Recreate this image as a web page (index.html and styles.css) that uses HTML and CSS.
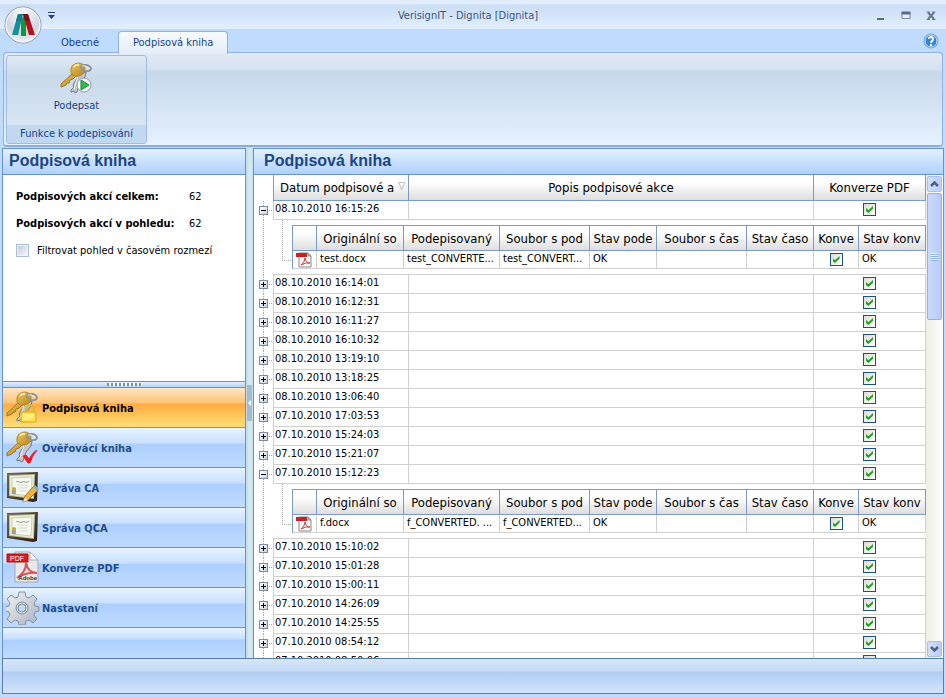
FILE: index.html
```html
<!DOCTYPE html>
<html lang="cs">
<head>
  <meta charset="UTF-8" />
  <meta name="viewport" content="width=device-width, initial-scale=1.0">
  <title>VerisignIT - Dignita [Dignita]</title>
  <link rel="stylesheet" href="styles.css">
</head>
<body>

  <!-- Shared icons -->
  <svg class="defs" width="0" height="0" aria-hidden="true">
    <defs>
      <linearGradient id="gold" x1="0" y1="0" x2="1" y2="1">
        <stop offset="0" stop-color="#ecc75f" />
        <stop offset="1" stop-color="#b98318" />
      </linearGradient>
      <linearGradient id="silver" x1="0" y1="0" x2="1" y2="1">
        <stop offset="0" stop-color="#f1f4f8" />
        <stop offset="1" stop-color="#a9b2be" />
      </linearGradient>
      <linearGradient id="frame" x1="0" y1="0" x2="1" y2="1">
        <stop offset="0" stop-color="#7a6a52" />
        <stop offset="1" stop-color="#2c1a10" />
      </linearGradient>
      <radialGradient id="orb" cx="0.5" cy="0.25" r="0.8">
        <stop offset="0" stop-color="#ffffff" />
        <stop offset="0.6" stop-color="#cfd6e2" />
        <stop offset="1" stop-color="#f7f9fc" />
      </radialGradient>
    </defs>
    <symbol id="keys" viewBox="0 0 32 32">
      <path d="M20 12l-6 9-1 3 1 1-3 3 0 2 3-1 1 2 2-1 3-9 5-6 1-5z" fill="#c3c6cb" stroke="#777b84" />
      <path d="M18 14l-4 13" stroke="#f5f6f8" />
      <path d="M12 12L1 22l0 3 5-2 1-2 2 0 1-3 3-1 4-4z" fill="url(#gold)" stroke="#a0761c" />
      <path d="M11 7q1-5 7-6q6 0 7 5q0 7-7 8q-3 1-5-1q-3-2-2-6z" fill="url(#gold)" stroke="#b5862a" />
      <path d="M14 5q2-3 5-2" fill="none" stroke="#fbe9a4" stroke-width="2" />
      <ellipse cx="26" cy="6" rx="5" ry="3" fill="none" stroke="#8c949d" stroke-width="2" transform="rotate(12 26 6)" />
      <path d="M22 4q4-1 7 2" fill="none" stroke="#e6ebef" />
    </symbol>
    <symbol id="certificate" viewBox="0 0 32 32">
      <path d="M1 2L32 1L31 30L27 31L1 27Z" fill="url(#frame)" />
      <path d="M3 4L29 3L28 28L3 25Z" fill="#b9bd98" />
      <path d="M4 5L28 4L27 27L4 24Z" fill="#e9f0dc" />
      <path d="M6 7l20-1-1 19-19-2z" fill="#f8faf2" stroke="#c5d4ae" />
      <path d="M10 11q1-1 3 0t3 0 3 0 4-1" fill="none" stroke="#8b988f" />
      <path d="M11 14h11M12 17h9M14 20h8" fill="none" stroke="#d3dbcd" />
      <path d="M7 19v4M9 19v4" stroke="#3a4f88" />
      <circle cx="8" cy="18" r="2" fill="#c9a93c" />
    </symbol>
    <symbol id="pdf-small" viewBox="0 0 16 16">
      <path d="M3 1h9l3 3v11H3z" fill="#f8f8f8" stroke="#8a8a8a" />
      <path d="M12 1v3h3z" fill="#c9c9c9" stroke="#8a8a8a" />
      <path d="M0 1h11v4H0z" fill="#cf2020" />
      <path d="M5 13q4-3 4-7q1 5 5 5q-4-1-9 2z" fill="none" stroke="#d03b3b" />
    </symbol>
  </svg>

  <div class="window">

    <header class="title-bar">
      <button class="quick-menu" aria-label="Nabídka rychlého přístupu">
        <svg width="7" height="7" viewBox="0 0 14 14"><path d="M0 0h14v2H0zM0 6h14L7 14z" fill="#27407a" /></svg>
      </button>
      <h1>VerisignIT - Dignita [Dignita]</h1>
      <div class="window-buttons">
        <button aria-label="Minimalizovat"><svg width="10" height="10" viewBox="0 0 10 10"><path d="M1 7h7v2H1z" fill="#5b6b85" /></svg></button>
        <button aria-label="Maximalizovat"><svg width="10" height="10" viewBox="0 0 20 20"><path d="M2 4h16v11H2z" fill="#e8eefa" stroke="#7b89a5" stroke-width="2" /><path d="M1 1h18v6H1z" fill="#5b6b85" /></svg></button>
        <button aria-label="Zavřít"><svg width="10" height="10" viewBox="0 0 20 20"><path d="M4 3l12 13M16 3L4 16" stroke="#66738b" stroke-width="4" /><path d="M1 2h7M12 2h7M1 17h7M12 17h7" stroke="#66738b" stroke-width="2" /></svg></button>
      </div>
    </header>

    <button class="app-button" aria-label="Hlavní nabídka">
      <svg width="38" height="38" viewBox="0 0 38 38">
        <circle cx="19" cy="19" r="18" fill="url(#orb)" stroke="#8b97ab" />
        <circle cx="19" cy="19" r="17" fill="none" stroke="#ffffff" />
        <path d="M17 13l3-3 2 3v17h-5z" fill="#0b9a3c" />
        <path d="M14 8h5l-5 21H8z" fill="#12909c" />
        <path d="M19 8h5l7 21h-6z" fill="#b3121d" />
        <path d="M19 8h5l2 7h-5z" fill="#7d1018" />
        <path d="M14 8h5l-2 7h-5z" fill="#0e7d94" />
      </svg>
    </button>

    <nav class="tabs">
      <a href="#obecne">Obecné</a>
      <a href="#kniha" class="active">Podpisová kniha</a>
      <button class="help" aria-label="Nápověda">
        <svg width="16" height="16" viewBox="0 0 16 16">
          <circle cx="8" cy="8" r="7" fill="#2c87e4" stroke="#8ca2c4" />
          <circle cx="8" cy="8" r="6" fill="none" stroke="#d8eaff" />
          <path d="M6 6q0-2 2-2t2 2q0 1-1 2t-1 2M8 11v2" fill="none" stroke="#fff" stroke-width="2" />
        </svg>
      </button>
    </nav>

    <section class="ribbon">
      <div class="ribbon-group">
        <button class="ribbon-button">
          <svg width="34" height="34" viewBox="0 0 34 34">
            <use href="#keys" width="32" height="32" />
            <circle cx="24" cy="23" r="7" fill="#f6f8fa" stroke="#929aa5" />
            <path d="M21 18l8 5-8 5z" fill="#2fbd4b" stroke="#128b30" />
          </svg>
          <span>Podepsat</span>
        </button>
        <div class="ribbon-caption">Funkce k podepisování</div>
      </div>
    </section>

    <main class="content">

      <aside class="sidebar">
        <h2>Podpisová kniha</h2>
        <div class="summary">
          <dl>
            <dt>Podpisových akcí celkem:</dt><dd>62</dd>
            <dt>Podpisových akcí v pohledu:</dt><dd>62</dd>
          </dl>
          <label class="filter"><input type="checkbox"> Filtrovat pohled v časovém rozmezí</label>
        </div>
        <div class="grip"><span></span></div>
        <nav class="modules">
          <a href="#kniha" class="active">
            <svg width="34" height="34" viewBox="0 0 34 34">
              <use href="#keys" width="32" height="32" />
              <path d="M20 21q0-7 4-7t4 7" fill="none" stroke="#d8ba3a" stroke-width="2" />
              <path d="M15 21h15v10H15z" fill="#ffe04a" stroke="#d2a91a" />
              <path d="M17 24h11M17 26h11M17 28h8" stroke="#fff8bd" />
            </svg>
            Podpisová kniha
          </a>
          <a href="#overovaci">
            <svg width="34" height="34" viewBox="0 0 34 34">
              <use href="#keys" width="32" height="32" />
              <path d="M17 25l3-1 3 4q4-7 8-9q-5 6-7 13h-2z" fill="#ee1c25" stroke="#ee1c25" />
            </svg>
            Ověřovácí kniha
          </a>
          <a href="#ca">
            <svg width="34" height="34" viewBox="0 0 34 34">
              <use href="#certificate" width="32" height="32" />
              <path d="M17 31l2-6L28 15l4 4-10 10z" fill="#f3b33a" stroke="#a86f16" />
              <path d="M27 16l2-2 4 4-2 2z" fill="#7fb5a8" />
              <path d="M17 31l2-5 3 3z" fill="#f7e3bd" />
            </svg>
            Správa CA
          </a>
          <a href="#qca">
            <svg width="34" height="34" viewBox="0 0 34 34"><use href="#certificate" width="32" height="32" /></svg>
            Správa QCA
          </a>
          <a href="#pdf">
            <svg width="34" height="34" viewBox="0 0 34 34">
              <path d="M9 1h15l8 8v22H9z" fill="#e9e9e9" stroke="#a9a9a9" />
              <path d="M24 1v8h8z" fill="#ffffff" stroke="#a9a9a9" />
              <path d="M11 27q9-6 9-15q2 10 11 10q-10-1-20 5z" fill="none" stroke="#dc5257" stroke-width="2" />
              <path d="M1 3h21v8H1z" fill="#d81c20" stroke="#a50f12" />
              <text x="4" y="10" class="pdf-tag">PDF</text>
              <text x="31" y="29" text-anchor="end" class="pdf-brand">Adobe</text>
            </svg>
            Konverze PDF
          </a>
          <a href="#nastaveni">
            <svg width="34" height="34" viewBox="0 0 34 34">
              <path d="M13 1h6l1 5 3 1 4-3 4 4-3 4 1 3 4 1v4l-4 1-1 3 3 4-4 4-4-3-3 1-1 4h-6l-1-4-3-1-4 3-4-4 3-4-1-3-4-1v-4l4-1 1-3-3-4 4-4 4 3 3-1z" fill="url(#silver)" stroke="#8692a1" />
              <circle cx="16" cy="17" r="6" fill="#dbe3ec" stroke="#8290a0" />
              <circle cx="16" cy="17" r="4" fill="#bfdaf8" stroke="#8290a0" />
            </svg>
            Nastavení
          </a>
          <div class="modules-rest"></div>
        </nav>
      </aside>

      <div class="splitter"><button aria-label="Skrýt panel"></button></div>

      <section class="book">
        <h2>Podpisová kniha</h2>
        <div class="book-body">
          <div class="grid-view">
            <table class="grid">
              <colgroup><col class="c-tree"><col class="c-date"><col><col class="c-pdf"></colgroup>
              <thead>
                <tr><td></td><th class="sorted">Datum podpisové a</th><th>Popis podpisové akce</th><th>Konverze PDF</th></tr>
              </thead>
              <tbody>
                <tr><td><button class="toggle open" aria-label="Sbalit"></button></td><td>08.10.2010 16:15:26</td><td></td><td><input type="checkbox" aria-label="Konverze PDF" checked></td></tr>
                <tr class="detail">
                  <td></td>
                  <td colspan="3">
                    <table class="files">
                      <colgroup><col class="f-icon"><col class="f-original"><col class="f-signed"><col class="f-signature"><col class="f-state"><col><col class="f-state"><col class="f-conv"><col class="f-state"></colgroup>
                      <thead>
                        <tr><th></th><th>Originální so</th><th>Podepisovaný</th><th>Soubor s pod</th><th>Stav pode</th><th>Soubor s čas</th><th>Stav časo</th><th>Konve</th><th>Stav konv</th></tr>
                      </thead>
                      <tbody>
                        <tr><td><svg width="16" height="16"><use href="#pdf-small" /></svg></td><td>test.docx</td><td>test_CONVERTE...</td><td>test_CONVERT...</td><td>OK</td><td></td><td></td><td><input type="checkbox" aria-label="Konverze" checked></td><td>OK</td></tr>
                      </tbody>
                    </table>
                  </td>
                </tr>
                <tr><td><button class="toggle" aria-label="Rozbalit"></button></td><td>08.10.2010 16:14:01</td><td></td><td><input type="checkbox" aria-label="Konverze PDF" checked></td></tr>
                <tr><td><button class="toggle" aria-label="Rozbalit"></button></td><td>08.10.2010 16:12:31</td><td></td><td><input type="checkbox" aria-label="Konverze PDF" checked></td></tr>
                <tr><td><button class="toggle" aria-label="Rozbalit"></button></td><td>08.10.2010 16:11:27</td><td></td><td><input type="checkbox" aria-label="Konverze PDF" checked></td></tr>
                <tr><td><button class="toggle" aria-label="Rozbalit"></button></td><td>08.10.2010 16:10:32</td><td></td><td><input type="checkbox" aria-label="Konverze PDF" checked></td></tr>
                <tr><td><button class="toggle" aria-label="Rozbalit"></button></td><td>08.10.2010 13:19:10</td><td></td><td><input type="checkbox" aria-label="Konverze PDF" checked></td></tr>
                <tr><td><button class="toggle" aria-label="Rozbalit"></button></td><td>08.10.2010 13:18:25</td><td></td><td><input type="checkbox" aria-label="Konverze PDF" checked></td></tr>
                <tr><td><button class="toggle" aria-label="Rozbalit"></button></td><td>08.10.2010 13:06:40</td><td></td><td><input type="checkbox" aria-label="Konverze PDF" checked></td></tr>
                <tr><td><button class="toggle" aria-label="Rozbalit"></button></td><td>07.10.2010 17:03:53</td><td></td><td><input type="checkbox" aria-label="Konverze PDF" checked></td></tr>
                <tr><td><button class="toggle" aria-label="Rozbalit"></button></td><td>07.10.2010 15:24:03</td><td></td><td><input type="checkbox" aria-label="Konverze PDF" checked></td></tr>
                <tr><td><button class="toggle" aria-label="Rozbalit"></button></td><td>07.10.2010 15:21:07</td><td></td><td><input type="checkbox" aria-label="Konverze PDF" checked></td></tr>
                <tr><td><button class="toggle open" aria-label="Sbalit"></button></td><td>07.10.2010 15:12:23</td><td></td><td><input type="checkbox" aria-label="Konverze PDF" checked></td></tr>
                <tr class="detail">
                  <td></td>
                  <td colspan="3">
                    <table class="files">
                      <colgroup><col class="f-icon"><col class="f-original"><col class="f-signed"><col class="f-signature"><col class="f-state"><col><col class="f-state"><col class="f-conv"><col class="f-state"></colgroup>
                      <thead>
                        <tr><th></th><th>Originální so</th><th>Podepisovaný</th><th>Soubor s pod</th><th>Stav pode</th><th>Soubor s čas</th><th>Stav časo</th><th>Konve</th><th>Stav konv</th></tr>
                      </thead>
                      <tbody>
                        <tr><td><svg width="16" height="16"><use href="#pdf-small" /></svg></td><td>f.docx</td><td>f_CONVERTED. ...</td><td>f_CONVERTED...</td><td>OK</td><td></td><td></td><td><input type="checkbox" aria-label="Konverze" checked></td><td>OK</td></tr>
                      </tbody>
                    </table>
                  </td>
                </tr>
                <tr><td><button class="toggle" aria-label="Rozbalit"></button></td><td>07.10.2010 15:10:02</td><td></td><td><input type="checkbox" aria-label="Konverze PDF" checked></td></tr>
                <tr><td><button class="toggle" aria-label="Rozbalit"></button></td><td>07.10.2010 15:01:28</td><td></td><td><input type="checkbox" aria-label="Konverze PDF" checked></td></tr>
                <tr><td><button class="toggle" aria-label="Rozbalit"></button></td><td>07.10.2010 15:00:11</td><td></td><td><input type="checkbox" aria-label="Konverze PDF" checked></td></tr>
                <tr><td><button class="toggle" aria-label="Rozbalit"></button></td><td>07.10.2010 14:26:09</td><td></td><td><input type="checkbox" aria-label="Konverze PDF" checked></td></tr>
                <tr><td><button class="toggle" aria-label="Rozbalit"></button></td><td>07.10.2010 14:25:55</td><td></td><td><input type="checkbox" aria-label="Konverze PDF" checked></td></tr>
                <tr><td><button class="toggle" aria-label="Rozbalit"></button></td><td>07.10.2010 08:54:12</td><td></td><td><input type="checkbox" aria-label="Konverze PDF" checked></td></tr>
                <tr><td><button class="toggle" aria-label="Rozbalit"></button></td><td>07.10.2010 08:50:06</td><td></td><td><input type="checkbox" aria-label="Konverze PDF" checked></td></tr>
              </tbody>
            </table>
          </div>
          <div class="scrollbar">
            <button aria-label="Nahoru"><svg width="9" height="6" viewBox="0 0 18 12"><path d="M2 10l7-7 7 7" fill="none" stroke="#4d6185" stroke-width="5" /></svg></button>
            <div class="thumb"></div>
            <button class="down" aria-label="Dolů"><svg width="9" height="6" viewBox="0 0 18 12"><path d="M2 2l7 7 7-7" fill="none" stroke="#4d6185" stroke-width="5" /></svg></button>
          </div>
        </div>
      </section>

    </main>

    <footer class="status-bar"></footer>
  </div>

</body>
</html>
```

FILE: styles.css
```css
* {
  box-sizing: border-box;
}

body {
  margin: 0;
  font-family: "DejaVu Sans Condensed", "DejaVu Sans", sans-serif;
  font-size: 11px;
  color: #000;
}

button {
  font: inherit;
  color: inherit;
  padding: 0;
  border: none;
  background: none;
}

a {
  color: inherit;
  text-decoration: none;
}

svg {
  display: block;
}

.defs {
  position: absolute;
}

.window {
  position: relative;
  display: flex;
  flex-direction: column;
  height: 100vh;
  padding: 0 2px 3px;
  background: #bfdbff;
}

/* Title bar */
.title-bar {
  display: grid;
  grid-template-columns: 1fr auto 1fr;
  align-items: center;
  height: 29px;
  margin: 0 -2px;
  padding: 2px 10px 0 0;
  background: linear-gradient(#dfebfb 0, #e5effc 3px, #cadef7 5px, #d3e4fa 50%, #e3effe 100%);
}

.quick-menu {
  justify-self: start;
  margin-left: 48px;
}

.title-bar h1 {
  margin: 0;
  font-size: 11px;
  font-weight: normal;
  color: #3e5380;
}

.window-buttons {
  display: flex;
  justify-content: flex-end;
  gap: 15px;
}

.app-button {
  position: absolute;
  left: 4px;
  top: 6px;
}

/* Ribbon */
.tabs {
  display: flex;
  height: 23px;
  padding-left: 45px;
  color: #15428b;
}

.tabs a {
  height: 23px;
  padding: 0 14px;
  margin-top: 2px;
  line-height: 24px;
}

.tabs a.active {
  z-index: 1;
  margin-left: 5px;
  background: linear-gradient(#f7fbff, #e3ecf8);
  border: 1px solid #8db2e3;
  border-bottom: none;
  border-radius: 4px 4px 0 0;
  line-height: 22px;
}

.help {
  margin-left: auto;
  margin-right: 5px;
}

.ribbon {
  height: 95px;
  margin: 0 1px 1px;
  padding: 2px;
  background: linear-gradient(#e1eaf5 0, #d5e1ef 17px, #c7d8eb 18px, #e5f1ff 100%);
  border: 1px solid #8db2e3;
  border-bottom: 2px solid #8fabd8;
  border-radius: 4px;
}

.ribbon-group {
  display: flex;
  flex-direction: column;
  width: 141px;
  height: 89px;
  color: #15428b;
  background: linear-gradient(#e0eaf5, #c9daec 20px, #dde9f7);
  border: 1px solid #9fbbe0;
  border-radius: 3px;
}

.ribbon-button {
  display: flex;
  flex-direction: column;
  align-items: center;
  gap: 3px;
  flex: 1;
  padding-top: 6px;
}

.ribbon-caption {
  height: 18px;
  line-height: 18px;
  text-align: center;
  background: #c1d8f1;
}

/* Content */
.content {
  display: flex;
  flex: 1;
  min-height: 0;
}

h2 {
  margin: 0;
  height: 26px;
  padding-left: 6px;
  font: bold 16px/24px "Liberation Sans", Arial, sans-serif;
  color: #1e4584;
  background: linear-gradient(#e3f0ff, #afd2ff);
  border-bottom: 1px solid #6593cf;
}

.sidebar {
  display: flex;
  flex-direction: column;
  width: 244px;
  background: #fff;
  border: 1px solid #6593cf;
  border-bottom: none;
}

.summary {
  flex: 1;
  padding: 15px 13px;
}

.summary dl {
  display: grid;
  grid-template-columns: 173px auto;
  row-gap: 13px;
  margin: 0;
  line-height: 14px;
}

.summary dt {
  font-weight: bold;
}

.summary dd {
  margin: 0;
}

.filter {
  display: flex;
  align-items: center;
  gap: 8px;
  margin-top: 13px;
}

input[type="checkbox"] {
  appearance: none;
  display: block;
  width: 13px;
  height: 13px;
  margin: 0 auto;
  background: linear-gradient(135deg, #dcdcd7, #fff);
  border: 1px solid #1c5180;
}

.filter input[type="checkbox"] {
  margin: 0;
  border: 2px solid #f0f5fa;
  outline: 1px solid #a5bdd8;
  outline-offset: -1px;
  background: linear-gradient(135deg, #c2cbd6, #f5f7fa);
}

input[type="checkbox"]:checked::before {
  content: "";
  display: block;
  width: 7px;
  height: 7px;
  margin: 2px;
  background: #21a121;
  clip-path: polygon(0 30%, 35% 60%, 100% 0, 100% 40%, 35% 100%, 0 70%);
}

.grip {
  display: flex;
  justify-content: center;
  height: 7px;
  padding-top: 1px;
  background: linear-gradient(#e3efff, #b4d3fb);
  border-top: 1px solid #6593cf;
  border-bottom: 1px solid #6593cf;
}

.grip span {
  width: 35px;
  height: 3px;
  background: repeating-linear-gradient(90deg, #6a8fc5 0 2px, #fff 2px 4px);
}

.modules a {
  display: flex;
  align-items: center;
  gap: 2px;
  height: 40px;
  padding: 1px 0 0 3px;
  font-weight: bold;
  color: #204d89;
  background: linear-gradient(#e8f3ff 0, #c8e0ff 15px, #adcfff 16px, #bfdbff 100%);
  border-bottom: 1px solid #6593cf;
}

.modules a.active {
  color: #000;
  background: linear-gradient(#ffe6c4 0, #ffc377 15px, #ffab3f 16px, #fedf78 100%);
}

.modules-rest {
  height: 30px;
  background: linear-gradient(#e8f3ff 0, #c8e0ff 11px, #adcfff 12px, #bfdbff 100%);
}

.pdf-tag {
  font: 7px "Liberation Sans", sans-serif;
  fill: #fff;
}

.pdf-brand {
  font: bold 6px "Liberation Sans", sans-serif;
  fill: #333;
}

.splitter {
  display: flex;
  align-items: center;
  justify-content: center;
  width: 7px;
  background: linear-gradient(90deg, #bcd9e8, #d8ecef, #c5dff5);
}

.splitter button {
  width: 5px;
  height: 36px;
  background: #a6bcc9;
}

.splitter button::before {
  content: "";
  display: block;
  width: 0;
  margin: 0 auto;
  border: 3px solid transparent;
  border-left: none;
  border-right-color: #fff;
}

/* Signing book */
.book {
  display: flex;
  flex-direction: column;
  flex: 1;
  min-width: 0;
  background: #fff;
  border: 1px solid #6593cf;
  border-bottom: none;
}

.book h2 {
  padding-left: 10px;
}

.book-body {
  display: flex;
  flex: 1;
  min-height: 0;
}

.grid-view {
  flex: 1;
  overflow: hidden;
}

table {
  width: 100%;
  table-layout: fixed;
  border-collapse: separate;
  border-spacing: 0;
}

th,
td {
  padding: 0;
  overflow: hidden;
  white-space: nowrap;
}

th {
  height: 26px;
  font-size: 13px;
  font-weight: normal;
  background: linear-gradient(#fff 30%, #dedede);
  border-right: 1px solid #7b98cf;
  border-bottom: 1px solid #7b98cf;
}

.c-tree { width: 19px; }
.c-date { width: 136px; }
.c-pdf { width: 112px; }

.sorted {
  padding-left: 6px;
  text-align: left;
  border-left: 1px solid #7b98cf;
}

.sorted::after {
  content: "▽";
  margin-left: 4px;
  font-size: 10px;
  color: #888;
  vertical-align: top;
}

.grid > tbody > tr > td {
  height: 19px;
  border-right: 1px solid #d0d0d0;
  border-bottom: 1px solid #d0d0d0;
}

.grid > tbody > tr > td:nth-child(2) {
  padding: 0 0 3px 1px;
  border-left: 1px solid #d0d0d0;
}

.grid > tbody > tr > td:last-child {
  padding-bottom: 1px;
}

.grid > tbody > tr > td:first-child {
  background:
    repeating-linear-gradient(#aaa 0 1px, #fff 1px 2px) 9px 0 / 1px 100% no-repeat,
    repeating-linear-gradient(90deg, #aaa 0 1px, #fff 1px 2px) 15px 9px / 4px 1px no-repeat;
  border: none;
}

.toggle {
  display: block;
  width: 9px;
  height: 9px;
  margin-left: 5px;
  background:
    linear-gradient(#000, #000) center / 5px 1px no-repeat,
    linear-gradient(#000, #000) center / 1px 5px no-repeat,
    linear-gradient(135deg, #fff, #c9d2dd);
  border: 1px solid #7b8ba4;
}

.toggle.open {
  background:
    linear-gradient(#000, #000) center / 5px 1px no-repeat,
    linear-gradient(135deg, #fff, #c9d2dd);
}

/* Expanded row with the signed files */
.grid > tbody > .detail > td:nth-child(2) {
  height: 55px;
  padding: 5px 0 5px 19px;
  border-left: none;
  border-right: none;
  background:
    repeating-linear-gradient(#aaa 0 1px, #fff 1px 2px) 9px 0 / 1px 40px no-repeat,
    repeating-linear-gradient(90deg, #aaa 0 1px, #fff 1px 2px) 9px 40px / 10px 1px no-repeat;
}

.grid > tbody > .detail > td:first-child {
  background: repeating-linear-gradient(#aaa 0 1px, #fff 1px 2px) 9px 0 / 1px 100% no-repeat;
}

.files {
  border-left: 1px solid #7b98cf;
}

.files th {
  height: 26px;
  border-top: 1px solid #7b98cf;
}

.files td {
  height: 18px;
  padding: 0 0 2px 3px;
  background: #fff;
  border-right: 1px solid #d0d0d0;
  border-bottom: 1px solid #d0d0d0;
}

.files td:first-child {
  padding: 0 3px;
}

.files td:nth-child(8) {
  padding: 2px 0;
}

.f-icon { width: 24px; }
.f-original { width: 87px; }
.f-signed { width: 96px; }
.f-signature { width: 90px; }
.f-state { width: 67px; }
.f-conv { width: 45px; }

/* Scrollbar */
.scrollbar {
  display: flex;
  flex-direction: column;
  width: 17px;
  padding: 1px;
  background: linear-gradient(90deg, #eeeee6, #fefefb);
}

.scrollbar button {
  display: grid;
  place-items: center;
  height: 16px;
  background: linear-gradient(90deg, #d3e0fd, #b9cdf9);
  border: 1px solid #a9bfec;
  border-radius: 2px;
}

.scrollbar .down {
  margin-top: auto;
}

.thumb {
  display: grid;
  place-items: center;
  height: 127px;
  margin-top: 1px;
  background: linear-gradient(90deg, #cbd9fd, #b8cbf8);
  border: 1px solid #98b0e8;
  border-radius: 2px;
}

.thumb::before {
  content: "";
  width: 7px;
  height: 8px;
  background: repeating-linear-gradient(#eef4fe 0 1px, #8cb0f8 1px 2px);
}

.status-bar {
  height: 36px;
  background: linear-gradient(#d7e6f9 0, #c5dbf7 12px, #b0cdf1 13px, #d3e4fb 100%);
  border: 1px solid #567db1;
}
```
